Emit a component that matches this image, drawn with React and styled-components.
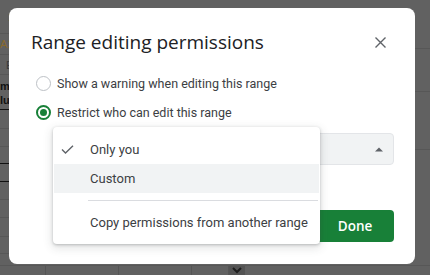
import React from "react";
import styled, { createGlobalStyle } from "styled-components";

const Global = createGlobalStyle`
  html, body { margin: 0; padding: 0; background: #616161; }
  body { font-family: Roboto, "Noto Sans", Arial, sans-serif; }
  * { box-sizing: border-box; }
`;

const Page = styled.div`
  position: relative;
  width: 430px;
  height: 275px;
  overflow: hidden;
  background: #616161;
`;

/* ---------- dimmed spreadsheet backdrop ---------- */
const Backdrop = styled.div`
  position: absolute;
  inset: 0;
  display: flex;
  flex-direction: column;
`;

const SheetMain = styled.div`
  height: 265px;
  display: flex;
  justify-content: space-between;
`;

const SideCol = styled.div`
  width: ${(p) => p.$w}px;
  display: flex;
  flex-direction: column;
`;

const SheetRow = styled.div`
  height: ${(p) => p.$h}px;
  flex: none;
  border-bottom: ${(p) => (p.$strong ? "1.5px solid #111" : "1px solid #575757")};
  font-family: Arial, "Liberation Sans", sans-serif;
  font-size: 11px;
  line-height: ${(p) => p.$h}px;
  color: ${(p) => p.$color || "#333"};
  font-weight: ${(p) => (p.$bold ? 700 : 400)};
  padding-left: ${(p) => p.$pad || 0}px;
  white-space: nowrap;
  overflow: hidden;
`;

const StackedText = styled.div`
  line-height: 14px;
  padding-top: ${(p) => p.$top}px;
  font-size: ${(p) => p.$size || 11}px;
`;

const SheetBottom = styled.div`
  flex: 1;
  display: flex;
  border-top: 1px solid #575757;
`;

const BottomCell = styled.div`
  width: ${(p) => p.$w}px;
  flex: none;
  border-right: 1px solid #555;
`;

const ScrollBox = styled.div`
  width: 16px;
  flex: none;
  background: #535353;
  display: flex;
  align-items: center;
  justify-content: center;
`;

/* ---------- dialog ---------- */
const Layer = styled.div`
  position: absolute;
  inset: 0;
  padding: 8px 0 0 9px;
`;

const Dialog = styled.div`
  position: relative;
  width: 406px;
  height: 256px;
  background: #fff;
  border-radius: 8px;
  display: flex;
  flex-direction: column;
  padding: 20px 21px 22px 22px;
`;

const Header = styled.div`
  display: flex;
  align-items: center;
  justify-content: space-between;
`;

const Title = styled.h1`
  margin: 0;
  font-family: "Open Sans", Roboto, sans-serif;
  font-weight: 400;
  font-size: 19px;
  line-height: 28px;
  color: #202124;
`;

const CloseBtn = styled.button`
  border: 0;
  background: none;
  padding: 0;
  width: 24px;
  height: 24px;
  display: flex;
  align-items: center;
  justify-content: center;
  margin-right: 2px;
`;

const Options = styled.div`
  margin-top: 13px;
  margin-left: 5px;
  display: flex;
  flex-direction: column;
`;

const OptionRow = styled.label`
  height: 29px;
  display: flex;
  align-items: center;
  gap: 6px;
  font-size: 12.5px;
  color: #3c4043;
`;

const Radio = styled.span`
  width: 15px;
  height: 15px;
  border-radius: 50%;
  border: ${(p) => (p.$on ? "2px solid #188038" : "1px solid #bdc1c6")};
  display: flex;
  align-items: center;
  justify-content: center;
  flex: none;
  &::after {
    content: "";
    width: 7px;
    height: 7px;
    border-radius: 50%;
    background: ${(p) => (p.$on ? "#188038" : "transparent")};
  }
`;

const Select = styled.div`
  margin-top: 6px;
  margin-left: 22px;
  height: 32px;
  background: #f1f3f4;
  border: 1px solid #e3e5e8;
  border-radius: 4px;
  display: flex;
  align-items: center;
  justify-content: flex-end;
  padding-right: 10px;
`;

const Footer = styled.div`
  margin-top: auto;
  display: flex;
  justify-content: flex-end;
`;

const DoneBtn = styled.button`
  width: 78px;
  height: 32px;
  border: 0;
  border-radius: 4px;
  background: #188038;
  color: #fff;
  font-family: "Open Sans", Roboto, sans-serif;
  font-weight: 600;
  font-size: 13.5px;
`;

/* ---------- menu ---------- */
const Menu = styled.div`
  position: absolute;
  left: 44px;
  top: 119px;
  width: 267px;
  height: 117px;
  background: #fff;
  border-radius: 4px;
  box-shadow: 0 1px 3px rgba(60, 64, 67, 0.3), 0 3px 8px 2px rgba(60, 64, 67, 0.12);
  padding: 8px 1px 7px 1px;
  display: flex;
  flex-direction: column;
`;

const MenuItem = styled.div`
  height: 29px;
  display: flex;
  align-items: center;
  background: ${(p) => (p.$hover ? "#f1f3f4" : "transparent")};
  font-size: 13px;
  color: #3c4043;
`;

const CheckSlot = styled.span`
  width: 36px;
  padding-left: 7px;
  display: flex;
  align-items: center;
  flex: none;
`;

const Divider = styled.div`
  height: 1px;
  background: #dadce0;
  margin: 7px 1px 7px 34px;
`;

export default function App() {
  return (
    <>
      <Global />
      <Page>
        <Backdrop>
          <SheetMain>
            <SideCol $w={45}>
              <SheetRow $h={34} $color="#8a6a2c" $pad={8}>1</SheetRow>
              <SheetRow $h={21} $color="#8a6a2c">A1</SheetRow>
              <SheetRow $h={20} $color="#3a3a3a" $pad={6}>E</SheetRow>
              <SheetRow $h={35} $strong $bold $color="#111">
                <StackedText $top={4}>
                  mp<br />lu
                </StackedText>
              </SheetRow>
              <SheetRow $h={19} />
              <SheetRow $h={18} />
              <SheetRow $h={17} $strong />
              <SheetRow $h={18} $strong />
              <SheetRow $h={18} />
              <SheetRow $h={18} />
              <SheetRow $h={19} />
              <SheetRow $h={17} />
            </SideCol>
            <SideCol $w={40}>
              <SheetRow $h={49} $color="#222" $pad={2}>
                <StackedText $top={14} $size={12}>s ra</StackedText>
              </SheetRow>
              <SheetRow $h={43} />
              <SheetRow $h={58} />
            </SideCol>
          </SheetMain>
          <SheetBottom>
            <BottomCell $w={46} />
            <BottomCell $w={73} />
            <BottomCell $w={73} />
            <BottomCell $w={37} />
            <ScrollBox>
              <svg width="10" height="7" viewBox="0 0 10 7">
                <path d="M1 1 L5 5 L9 1" fill="none" stroke="#1e1e1e" strokeWidth="2" />
              </svg>
            </ScrollBox>
          </SheetBottom>
        </Backdrop>

        <Layer>
          <Dialog role="dialog">
            <Header>
              <Title>Range editing permissions</Title>
              <CloseBtn aria-label="Close">
                <svg width="11" height="11" viewBox="0 0 11 11">
                  <path d="M0.5 0.5 L10.5 10.5 M10.5 0.5 L0.5 10.5" stroke="#5f6368" strokeWidth="1.4" />
                </svg>
              </CloseBtn>
            </Header>
            <Options>
              <OptionRow>
                <Radio />
                Show a warning when editing this range
              </OptionRow>
              <OptionRow>
                <Radio $on />
                Restrict who can edit this range
              </OptionRow>
            </Options>
            <Select>
              <svg width="8" height="5" viewBox="0 0 8 5">
                <path d="M0 4.5 L4 0.5 L8 4.5 Z" fill="#5f6368" />
              </svg>
            </Select>
            <Footer>
              <DoneBtn>Done</DoneBtn>
            </Footer>

            <Menu role="menu">
              <MenuItem>
                <CheckSlot>
                  <svg width="13" height="9" viewBox="0 0 13 9">
                    <path d="M1 4.5 L4.5 8 L12 0.8" fill="none" stroke="#5f6368" strokeWidth="1.4" />
                  </svg>
                </CheckSlot>
                Only you
              </MenuItem>
              <MenuItem $hover>
                <CheckSlot />
                Custom
              </MenuItem>
              <Divider />
              <MenuItem>
                <CheckSlot />
                Copy permissions from another range
              </MenuItem>
            </Menu>
          </Dialog>
        </Layer>
      </Page>
    </>
  );
}
